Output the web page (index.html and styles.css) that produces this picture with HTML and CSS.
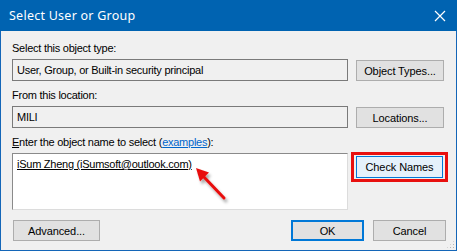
FILE: index.html
```html
<!DOCTYPE html>
<html lang="en">
<head>
  <meta charset="UTF-8" />
  <title>Select User or Group</title>
  <link rel="stylesheet" href="styles.css">
</head>
<body>
  <div class="window">
    <div class="titlebar">
      <span class="title">Select User or Group</span>
      <svg class="close" width="12" height="12" viewBox="0 0 12 12">
        <path d="M1 1 L11 11 M11 1 L1 11" stroke="#fff" stroke-width="1.2" />
      </svg>
    </div>

    <div class="content">
      <div class="label">Select this object type:</div>
      <div class="row">
        <div class="field">User, Group, or Built-in security principal</div>
        <button class="btn">Object Types...</button>
      </div>

      <div class="label">From this location:</div>
      <div class="row">
        <div class="field">MILI</div>
        <button class="btn">Locations...</button>
      </div>

      <div class="label"><u>E</u>nter the object name to select (<a href="#" class="link">examples</a>):</div>
      <div class="row">
        <div class="names-box"><u>iSum Zheng (iSumsoft@outlook.com)</u></div>
        <div class="highlight">
          <button class="btn btn-hover">Check Names</button>
        </div>
      </div>

      <div class="footer">
        <button class="btn">Advanced...</button>
        <div class="footer-right">
          <button class="btn btn-default">OK</button>
          <button class="btn">Cancel</button>
        </div>
      </div>
    </div>

    <!-- annotation arrow -->
    <svg class="arrow" width="48" height="48" viewBox="0 0 48 48">
      <defs>
        <filter id="shadow" x="-30%" y="-30%" width="180%" height="180%">
          <feDropShadow dx="2" dy="3" stdDeviation="1.8" flood-color="#000" flood-opacity="0.35" />
        </filter>
      </defs>
      <g filter="url(#shadow)">
        <path d="M12 13 L33 35" stroke="#e8100f" stroke-width="3" stroke-linecap="round" />
        <path d="M5 5 L18 9.5 L9 18.5 Z" fill="#e8100f" />
      </g>
    </svg>

    <div class="grip"></div>
  </div>
</body>
</html>
```

FILE: styles.css
```css
* {
  box-sizing: border-box;
  margin: 0;
  padding: 0;
}

body {
  width: 457px;
  height: 251px;
  overflow: hidden;
  font-family: 'Liberation Sans', Arial, sans-serif;
  font-size: 11px;
  letter-spacing: -0.25px;
  color: #000;
}

.window {
  position: relative;
  width: 457px;
  height: 251px;
  background-color: #f0f0f0;
  border: 1px solid #1466b8;
  border-top: none;
}

.titlebar {
  height: 31px;
  margin: 0 -1px;
  background-color: #0063b1;
  color: white;
  display: flex;
  justify-content: space-between;
  align-items: center;
  padding: 0 11px 0 9px;
}

.title {
  font-family: 'Noto Sans', sans-serif;
  font-size: 12.5px;
  letter-spacing: 0.25px;
}

.content {
  padding: 11px 0 0 11px;
}

.label {
  line-height: 13px;
  margin-bottom: 4px;
}

.label + .row {
  margin-bottom: 8px;
}

.row {
  display: flex;
  gap: 8px;
  align-items: flex-start;
}

.field {
  flex-shrink: 0;
  width: 336px;
  height: 22px;
  border: 1px solid #7a7a7a;
  background-color: #f0f0f0;
  padding: 3px 0 0 4px;
  line-height: 14px;
}

.btn {
  flex-shrink: 0;
  width: 88px;
  height: 21px;
  margin-top: 1px;
  background-color: #e1e1e1;
  border: 1px solid #adadad;
  font-family: 'Liberation Sans', Arial, sans-serif;
  font-size: 11px;
  letter-spacing: -0.1px;
  color: #000;
}

.link {
  color: #0066cc;
}

.names-box {
  flex-shrink: 0;
  width: 336px;
  height: 57px;
  border: 1px solid #dcdcdc;
  border-top-color: #8a8a8a;
  border-left-color: #8a8a8a;
  background-color: white;
  padding: 3px 0 0 4px;
  line-height: 14px;
}

.highlight {
  flex-shrink: 0;
  border: 3px solid #e8100f;
  padding: 1px 2px 1px 2px;
  margin: -1px 0 0 -5px;
}

.btn-hover {
  width: 87px;
  margin-top: 0;
  height: 22px;
  background-color: #e5f1fb;
  border-color: #0078d7;
}

.footer {
  display: flex;
  justify-content: space-between;
  width: 433px;
  margin: 10px 0 0 1px;
}

.footer-right {
  display: flex;
  gap: 9px;
}

.footer .btn {
  height: 21px;
  margin-top: 0;
  width: 87px;
}

.footer-right .btn {
  width: 73px;
}

.footer .btn-default {
  border: 2px solid #0078d7;
}

.arrow {
  position: absolute;
  left: 190px;
  top: 163px;
}

.grip {
  position: absolute;
  right: 1px;
  bottom: 1px;
  width: 9px;
  height: 9px;
  background-image: radial-gradient(circle, #b5b5b5 1px, transparent 1px);
  background-size: 3px 3px;
  clip-path: polygon(100% 0, 100% 100%, 0 100%);
}
```
